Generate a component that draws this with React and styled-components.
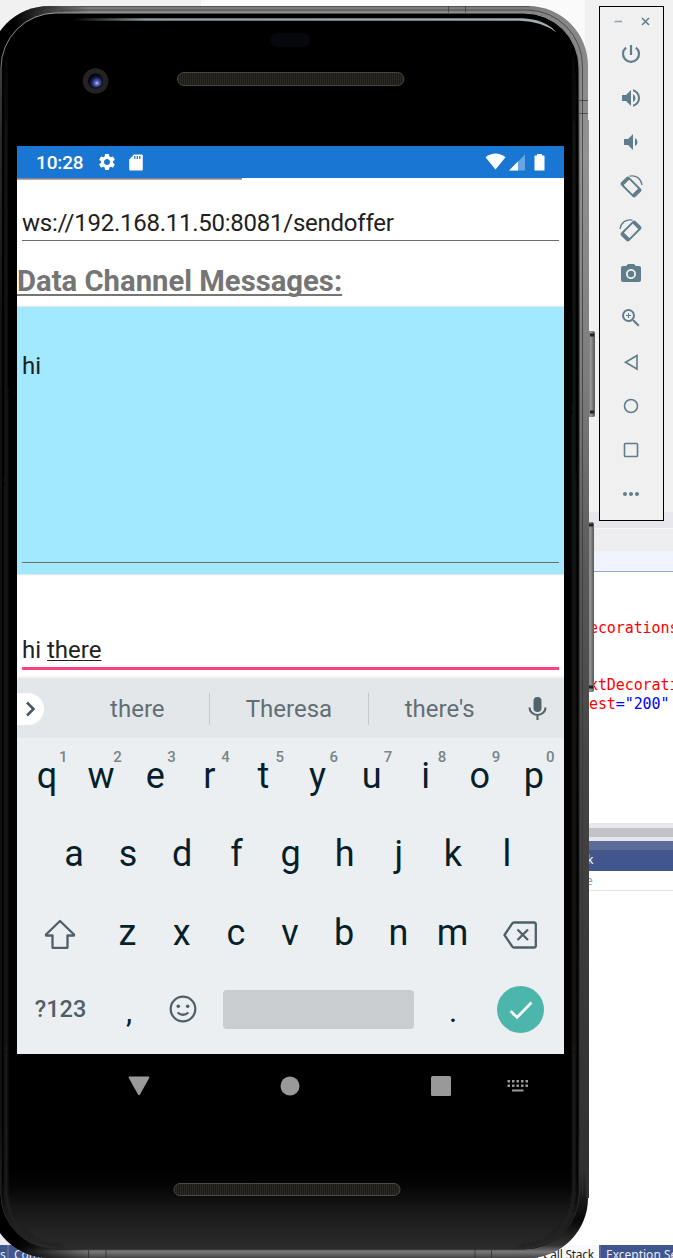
import React from "react";
import styled, { createGlobalStyle } from "styled-components";
import {
  MdSettings,
  MdVolumeUp,
  MdVolumeDown,
  MdPhotoCamera,
  MdZoomIn,
  MdMoreHoriz,
} from "react-icons/md";

const Global = createGlobalStyle`
  html, body { margin: 0; padding: 0; background: #fff; }
  * { box-sizing: border-box; }
  svg { display: block; flex: none; }
`;

const Desktop = styled.main`
  position: relative;
  width: 673px;
  height: 1258px;
  overflow: hidden;
  background: #fff;
  font-family: Roboto, "Liberation Sans", sans-serif;
`;

/* ---------- editor window behind the emulator ---------- */

const Ide = styled.section`
  display: flex;
  flex-direction: column;
  height: 1258px;
`;

const Band = styled.div`
  flex: none;
  height: ${(p) => p.$h}px;
  background: ${(p) => p.$bg};
`;

const TopBand = styled(Band)`
  display: flex;
  justify-content: center;
  padding: 0 88px 0 201px;
`;

const TopTab = styled.div`
  flex: 1;
  height: 60px;
  background: #fafafa;
`;

const Code = styled.pre`
  flex: none;
  height: 252px;
  margin: 0;
  padding: 47px 0 0 589px;
  border-top: 1px solid #93aad6;
  font: 15px/19px "DejaVu Sans Mono", monospace;
  letter-spacing: -0.1px;
  color: #f00;
  overflow: hidden;
`;

const Value = styled.span`
  color: #00f;
`;

const PaneTitle = styled.div`
  flex: none;
  height: 21px;
  padding-left: 587px;
  background: #40568d;
  color: #fff;
  font: 12px/20px "Noto Sans", sans-serif;
`;

const PaneHead = styled.div`
  flex: none;
  height: 20px;
  padding-left: 586px;
  border-bottom: 1px solid #e4e4f2;
  background: #fff;
  color: #999;
  font: 12px/19px "Noto Sans", sans-serif;
`;

const PaneBody = styled.div`
  flex: 1;
  display: flex;
  align-items: flex-end;
  background: linear-gradient(90deg, #ebebf1 0 300px, #fff 300px);
`;

const Tabs = styled.div`
  display: flex;
  width: 100%;
  height: 13px;
  overflow: hidden;
  background: linear-gradient(90deg, #40568d 0 300px, #5d6b99 300px);
`;

const Tab = styled.div`
  flex: none;
  width: ${(p) => p.$w}px;
  margin-left: ${(p) => p.$ml || 0}px;
  padding-left: ${(p) => p.$pl}px;
  background: ${(p) => (p.$active ? "#f7f8fe" : "#40568d")};
  color: ${(p) => (p.$active ? "#1e1e1e" : "#e8ecf8")};
  border-right: 2px solid #5d6b99;
  font: 12px/19px "Noto Sans", sans-serif;
  letter-spacing: ${(p) => p.$ls || 0}px;
  white-space: nowrap;
`;

/* ---------- phone ---------- */

const Phone = styled.section`
  position: absolute;
  inset: 0 auto 0 0;
  width: 600px;
  padding: 146px 36px 0 17px;
`;

const ChassisArt = styled.svg`
  position: absolute;
  top: 0;
  left: 0;
`;

const Screen = styled.div`
  position: relative;
  display: flex;
  flex-direction: column;
  height: 908px;
  background: #fff;
`;

const StatusBar = styled.header`
  display: flex;
  align-items: center;
  height: 32px;
  padding: 0 19px;
  background: #1976d2;
  color: #fff;
`;

const Clock = styled.span`
  width: 61px;
  font-size: 19px;
  font-weight: 500;
  line-height: 32px;
  padding-top: 1px;
  letter-spacing: -0.15px;
`;

const StatusGroup = styled.div`
  display: flex;
  align-items: center;
  gap: ${(p) => p.$gap}px;
  margin-left: ${(p) => (p.$end ? "auto" : "0")};
`;

const AppBody = styled.div`
  display: flex;
  flex-direction: column;
  height: 501px;
`;

const ScrollEdge = styled.div`
  width: 225px;
  height: 2px;
  background: linear-gradient(#777, #bbb);
`;

const Field = styled.div`
  margin: ${(p) => p.$mt}px 5px 0;
  height: ${(p) => p.$h}px;
  border-bottom: ${(p) => (p.$active ? "3px solid #ff4081" : "1px solid #6d6d6d")};
  color: #212121;
  font-size: 24px;
  line-height: 28px;
  letter-spacing: ${(p) => p.$ls || 0}px;
`;

const Heading = styled.h1`
  margin: 23px 0 9px;
  font-size: 29.25px;
  line-height: 34px;
  font-weight: 700;
  color: #757575;
  text-decoration: underline;
  text-decoration-thickness: 2px;
  text-underline-offset: 3px;
  text-decoration-skip-ink: none;
`;

const MessageArea = styled.div`
  height: 267px;
  padding-top: 45px;
  background: #a2e9ff;
  box-shadow: 0 0 2px rgba(0, 0, 0, 0.3);
`;

const Composing = styled.u`
  text-decoration-thickness: 1px;
  text-underline-offset: 2px;
`;

const Keyboard = styled.div`
  display: flex;
  flex-direction: column;
  height: 375px;
  background: #eceff1;
  box-shadow: 0 -1px 3px rgba(0, 0, 0, 0.15);
`;

const Suggestions = styled.div`
  display: flex;
  align-items: center;
  height: 59px;
  background: #e3e7ea;
`;

const Expand = styled.div`
  display: flex;
  align-items: center;
  justify-content: center;
  width: 27px;
  height: 32px;
  padding-left: 2px;
  margin-right: 5px;
  border-radius: 0 16px 16px 0;
  background: #fff;
`;

const Suggestion = styled.div`
  width: ${(p) => p.$w}px;
  height: 32px;
  padding-left: ${(p) => p.$pl || 0}px;
  border-right: ${(p) => (p.$last ? 0 : 1)}px solid #c3c8cb;
  text-align: center;
  font-size: 24px;
  line-height: 33px;
  color: #636e74;
`;

const Row = styled.div`
  display: flex;
  align-items: center;
  height: ${(p) => p.$h || 78}px;
  margin-top: ${(p) => p.$pull || 0}px;
  padding: 0 ${(p) => p.$inset || 3}px;
`;

const Key = styled.div`
  position: relative;
  display: flex;
  justify-content: center;
  align-items: center;
  flex: ${(p) => p.$flex || 1} 1 0;
  height: 100%;
  padding-top: ${(p) => p.$drop || 0}px;
  padding-right: ${(p) => p.$nudge || 0}px;
  color: #061f2b;
  font-size: ${(p) => p.$size || 36}px;
  line-height: 76px;
`;

const Hint = styled.span`
  position: absolute;
  top: 11px;
  right: 6.5px;
  font-size: 15px;
  font-weight: 500;
  line-height: 18px;
  color: #78858b;
`;

const Mode = styled.span`
  font-size: 23.5px;
  font-weight: 500;
  color: #4f5f67;
`;

const Space = styled.div`
  width: 191px;
  height: 39px;
  border-radius: 4px;
  background: #c9cdd0;
`;

const Enter = styled.div`
  display: flex;
  align-items: center;
  justify-content: center;
  width: 47px;
  height: 47px;
  border-radius: 50%;
  background: #4db6ac;
`;

const NavBar = styled.nav`
  position: relative;
  display: flex;
  align-items: center;
  height: 64px;
  padding-left: 111px;
`;

const NavIcon = styled.svg`
  margin-right: ${(p) => p.$mr}px;
  fill: #999;
`;

/* ---------- emulator toolbar ---------- */

const Toolbar = styled.aside`
  position: absolute;
  left: 599px;
  top: 6px;
  width: 65px;
  height: 515px;
  border: 1px solid #000;
  background: #f0f0f0;
  color: #607d8b;
`;

const WindowButtons = styled.div`
  display: flex;
  align-items: center;
  justify-content: space-between;
  height: 25px;
  padding: 3px 13px 0 14px;
`;

const Tool = styled.div`
  display: flex;
  align-items: center;
  justify-content: center;
  height: 44px;
  padding-right: 1px;
`;

function Chassis() {
  return (
    <ChassisArt width="600" height="1258" viewBox="0 0 600 1258">
      <defs>
        <linearGradient id="rim" x1="0" y1="0" x2="0" y2="1">
          <stop offset="0" stopColor="#777" />
          <stop offset="0.005" stopColor="#858585" />
          <stop offset="0.12" stopColor="#929292" />
          <stop offset="0.3" stopColor="#7c7c7c" />
          <stop offset="0.45" stopColor="#5a5a5a" />
          <stop offset="0.6" stopColor="#454545" />
          <stop offset="0.93" stopColor="#303030" />
          <stop offset="0.97" stopColor="#080808" />
          <stop offset="0.99" stopColor="#333" />
          <stop offset="0.995" stopColor="#777" />
          <stop offset="1" stopColor="#444" />
        </linearGradient>
        <linearGradient id="sideRim" gradientUnits="userSpaceOnUse" x1="0" y1="6" x2="0" y2="1258">
          <stop offset="0.12" stopColor="#929292" />
          <stop offset="0.3" stopColor="#7c7c7c" />
          <stop offset="0.45" stopColor="#5a5a5a" />
          <stop offset="0.6" stopColor="#454545" />
          <stop offset="0.93" stopColor="#303030" />
        </linearGradient>
        <linearGradient id="leftShade" gradientUnits="userSpaceOnUse" x1="0" y1="0" x2="90" y2="0">
          <stop offset="0.15" stopColor="#000" />
          <stop offset="1" stopColor="#000" stopOpacity="0" />
        </linearGradient>
        <linearGradient id="edge" x1="0" y1="0" x2="0" y2="1">
          <stop offset="0" stopColor="#999" />
          <stop offset="0.1" stopColor="#555" />
          <stop offset="0.25" stopColor="#222" />
          <stop offset="0.9" stopColor="#222" />
          <stop offset="0.97" stopColor="#444" />
          <stop offset="1" stopColor="#111" />
        </linearGradient>
        <linearGradient id="glow" x1="0" y1="0" x2="0" y2="1">
          <stop offset="0" stopColor="#000" stopOpacity="0" />
          <stop offset="0.5" stopColor="#161616" />
          <stop offset="1" stopColor="#2c2c2c" />
        </linearGradient>
        <linearGradient id="sideGlow" gradientUnits="userSpaceOnUse" x1="0" y1="40" x2="0" y2="1246">
          <stop offset="0" stopColor="#1a1a1a" stopOpacity="0" />
          <stop offset="0.08" stopColor="#1c1c1c" />
          <stop offset="1" stopColor="#202020" />
        </linearGradient>
        <linearGradient id="gloss" x1="0" y1="0" x2="1" y2="0">
          <stop offset="0" stopColor="#8fa0a0" stopOpacity="0" />
          <stop offset="0.15" stopColor="#8c9999" />
          <stop offset="1" stopColor="#a4aeb0" />
        </linearGradient>
        <linearGradient id="button" x1="0" y1="0" x2="1" y2="0">
          <stop offset="0" stopColor="#333" />
          <stop offset="0.5" stopColor="#9a9a9a" />
          <stop offset="1" stopColor="#555" />
        </linearGradient>
        <radialGradient id="lens" cx="0.6" cy="0.65" r="0.6">
          <stop offset="0" stopColor="#b9c4ff" />
          <stop offset="0.3" stopColor="#4a56b0" />
          <stop offset="0.7" stopColor="#141845" />
          <stop offset="1" stopColor="#05050c" />
        </radialGradient>
        <pattern id="mesh" width="2" height="2" patternUnits="userSpaceOnUse">
          <rect width="2" height="2" fill="#1b1a16" />
          <rect width="1" height="2" fill="#2b2923" />
        </pattern>
        <filter id="soft" filterUnits="userSpaceOnUse" x="-10" y="0" width="620" height="1258">
          <feGaussianBlur stdDeviation="1.3" />
        </filter>
        <clipPath id="face">
          <rect x="1" y="13" width="578" height="1236" rx="55" />
        </clipPath>
      </defs>

      <rect x="586" y="331" width="9" height="86" rx="2" fill="url(#button)" />
      <path d="M590 335h4M590 412h4" stroke="#222" strokeWidth="3" />
      <rect x="586" y="418" width="3" height="104" fill="#777" />
      <rect x="586" y="522" width="8" height="170" rx="2" fill="url(#button)" />
      <path d="M589 525h4M589 687h4" stroke="#222" strokeWidth="3" />

      <rect x="-11" y="6" width="599" height="1252" rx="60" fill="url(#rim)" />
      <rect x="586" y="120" width="3" height="1078" fill="url(#sideRim)" />
      <rect x="-11" y="6" width="599" height="1252" rx="60" fill="url(#leftShade)" />
      <path d="M60 10H528A56 56 0 0 1 582.5 66V1195" fill="none" stroke="#333" strokeOpacity="0.7" />
      <path d="M60 6.5H530" stroke="#555" />
      <path d="M448.500 6v7M465.500 6v7M579 100.500h9M579 113.500h9M579 1147.500h10M579 1160.500h10" stroke="#333" strokeOpacity="0.7" />
      <path d="M88.500 1250v8M106 1250v8M475 1250v8M491.500 1250v8" stroke="#222" strokeOpacity="0.6" />

      <rect x="1" y="13" width="578" height="1236" rx="55" fill="#000" stroke="url(#edge)" />
      <g clipPath="url(#face)">
        <rect x="0" y="1165" width="580" height="84" fill="url(#glow)" />
        <path d="M14 40Q6 52 6 70V1190Q8 1242 62 1246" fill="none" stroke="url(#sideGlow)" strokeWidth="3" filter="url(#soft)" />
        <path d="M566 40Q574 52 574 70V1190Q572 1242 518 1246" fill="none" stroke="url(#sideGlow)" strokeWidth="3" filter="url(#soft)" />
      </g>
      <path d="M73 18.300H522Q545 19 556.500 32.500Q542 21.500 520 20.800H73Z" fill="url(#gloss)" />

      <rect x="270" y="33" width="40" height="14" rx="7" fill="#07080d" />
      <circle cx="95.500" cy="81" r="12.800" fill="#242222" />
      <circle cx="95.500" cy="81" r="7.500" fill="#050508" />
      <circle cx="95.500" cy="81" r="6.800" fill="url(#lens)" />
      <rect x="177.500" y="72.500" width="226.500" height="13" rx="6.500" fill="url(#mesh)" stroke="#454545" />
      <rect x="174" y="1183.500" width="226" height="12" rx="6" fill="url(#mesh)" stroke="#4a4a4a" />
    </ChassisArt>
  );
}

function Rotate({ mirrored }) {
  return (
    <svg width="24" height="24" viewBox="0 0 24 24" fill="none" stroke="currentColor">
      <g transform={mirrored ? "translate(24 0) scale(-1 1)" : undefined}>
        <g transform="rotate(-45 12 13)">
          <rect x="7.200" y="3.800" width="9.600" height="18.400" rx="1.200" strokeWidth="1.900" />
          <path d="M7.200 5h9.600M7.200 20.800h9.600" strokeWidth="3.200" />
        </g>
        <path d="M10.500 2.200C17 .8 22 4.500 23 11" strokeWidth="1.300" />
      </g>
    </svg>
  );
}

const tools = [
  <svg width="24" height="24" fill="none" stroke="currentColor" strokeWidth="2.200">
    <path d="M12 3v10M7.100 5.600a8 8 0 1 0 9.800 0" />
  </svg>,
  <MdVolumeUp size={24} />,
  <MdVolumeDown size={24} />,
  <Rotate />,
  <Rotate mirrored />,
  <MdPhotoCamera size={24} />,
  <MdZoomIn size={24} />,
  <svg width="24" height="24" fill="none" stroke="currentColor" strokeWidth="1.600">
    <path d="M18 5.500v13.500L6.500 12.250z" />
  </svg>,
  <svg width="24" height="24" fill="none" stroke="currentColor" strokeWidth="1.600">
    <circle cx="12" cy="12" r="6.500" />
  </svg>,
  <svg width="24" height="24" fill="none" stroke="currentColor" strokeWidth="1.600">
    <rect x="5.500" y="5.500" width="13" height="13" rx="0.800" />
  </svg>,
  <MdMoreHoriz size={24} />,
];

const topRow = "qwertyuiop".split("");
const middleRow = "asdfghjkl".split("");
const bottomRow = "zxcvbnm".split("");

export default function App() {
  return (
    <Desktop>
      <Global />
      <Ide>
        <TopBand $h={512} $bg="#f1f1f1">
          <TopTab />
        </TopBand>
        <Band $h={16} $bg="#e6e6ec" />
        <Band $h={1} $bg="#f8f8fa" />
        <Band $h={22} $bg="#eeeef0" />
        <Band $h={20} $bg="#f0f4fe" />
        <Code>
          {"ecorations\n\n\nxtDecorati\n"}est<Value>="200"</Value>
        </Code>
        <Band $h={5} $bg="#e6e6ec" />
        <Band $h={9} $bg="#c2c3c8" />
        <Band $h={4} $bg="#e6e6ec" />
        <Band $h={9} $bg="#5d6b99" />
        <PaneTitle>k</PaneTitle>
        <PaneHead>e</PaneHead>
        <PaneBody>
          <Tabs>
            <Tab $w={9} $pl={-1}>s</Tab>
            <Tab $w={90} $pl={5}>Comm</Tab>
            <Tab $w={63} $ml={439} $pl={5} $active $ls={-0.25}>Call Stack</Tab>
            <Tab $w={110} $pl={5}>Exception Settings</Tab>
          </Tabs>
        </PaneBody>
      </Ide>

      <Phone>
        <Chassis />
        <Screen>
          <StatusBar>
            <Clock>10:28</Clock>
            <StatusGroup $gap={12}>
              <MdSettings size={20} />
              <svg width="14" height="17" viewBox="0 0 14 17">
                <path d="M5 .5h7.500q1.300 0 1.300 1.300v13.400q0 1.300-1.300 1.300h-11Q.2 16.500.2 15.200V5.500z" fill="#fff" />
                <path d="M5.800 2v3M8.300 2v3M10.800 2v3" stroke="#1976d2" strokeWidth="1.200" />
              </svg>
            </StatusGroup>
            <StatusGroup $gap={0} $end>
              <svg width="60" height="18" viewBox="0 0 60 18" fill="#fff">
                <path d="M.5 4.300Q10.500-3.200 20.500 4.300L10.500 16.500z" />
                <path d="M24 17.500 40 1.500v16z" fillOpacity="0.350" />
                <path d="M24 17.500 33 8.500v9z" />
                <path d="M50 2.500h2V1h5v1.500h2q.5 0 .5.500v14q0 .500-.5.500h-9q-.5 0-.5-.5V3q0-.5.500-.5z" />
              </svg>
            </StatusGroup>
          </StatusBar>
          <AppBody>
            <ScrollEdge />
            <Field $mt={29} $h={32} $ls={-0.25}>ws://192.168.11.50:8081/sendoffer</Field>
            <Heading>Data Channel Messages:</Heading>
            <MessageArea>
              <Field $mt={0} $h={211}>hi</Field>
            </MessageArea>
            <Field $mt={62} $h={34} $active>
              hi <Composing>there</Composing>
            </Field>
          </AppBody>
          <Keyboard>
            <Suggestions>
              <Expand>
                <svg width="12" height="16" viewBox="0 0 12 16" fill="none" stroke="#455a64" strokeWidth="2.600">
                  <path d="M2 1.500 8.500 8 2 14.500" />
                </svg>
              </Expand>
              <Suggestion $w={161} $pl={17}>there</Suggestion>
              <Suggestion $w={160}>Theresa</Suggestion>
              <Suggestion $w={141} $last>there's</Suggestion>
              <svg width="54" height="26" viewBox="0 0 54 26" fill="none" stroke="#546269" strokeWidth="2.100">
                <rect x="23.500" y="1" width="8" height="15" rx="4" fill="#546269" stroke="none" />
                <path d="M19.500 11.500a8 7.500 0 0 0 16 0M27.500 19v5" />
              </svg>
            </Suggestions>
            <Row $pull={-1}>
              {topRow.map((k, i) => (
                <Key key={k}>
                  {k}
                  <Hint>{(i + 1) % 10}</Hint>
                </Key>
              ))}
            </Row>
            <Row $inset={30}>
              {middleRow.map((k) => (
                <Key key={k}>{k}</Key>
              ))}
            </Row>
            <Row $h={79}>
              <Key $flex={1.5} $drop={2} $nudge={1}>
                <svg width="32" height="30" viewBox="0 0 32 30" fill="none" stroke="#4f5f67" strokeWidth="2.300" strokeLinejoin="round">
                  <path d="M16 2 30 15.500v1h-6.500V28q0 1-1 1h-13q-1 0-1-1V16.500H2v-1z" />
                </svg>
              </Key>
              {bottomRow.map((k) => (
                <Key key={k} $drop={1} $nudge={1}>{k}</Key>
              ))}
              <Key $flex={1.5} $drop={4} $nudge={1}>
                <svg width="34" height="28" viewBox="0 0 34 28" fill="none" stroke="#4f5f67" strokeWidth="2.300" strokeLinejoin="round">
                  <path d="M11 1.500h20q1.800 0 1.800 1.800v21.400q0 1.800-1.800 1.800H11q-1.200 0-1.800-1L1.500 14l7.700-11.500q.6-1 1.800-1zM14.500 8.500l10.500 10.500M25 8.500l-10.500 10.500" />
                </svg>
              </Key>
            </Row>
            <Row $h={76} $pull={-1}>
              <Key $flex={1.5} $nudge={1}>
                <Mode>?123</Mode>
              </Key>
              <Key $size={31} $drop={5}>,</Key>
              <Key>
                <svg width="28" height="28" viewBox="0 0 28 28" fill="none" stroke="#4f5f67" strokeWidth="2.200">
                  <circle cx="14" cy="14" r="12.300" />
                  <path d="M8.500 17.500q5.500 4.500 11 0" />
                  <circle cx="9.300" cy="11.300" r="1.800" fill="#4f5f67" stroke="none" />
                  <circle cx="18.700" cy="11.300" r="1.800" fill="#4f5f67" stroke="none" />
                </svg>
              </Key>
              <Key $flex={4}>
                <Space />
              </Key>
              <Key $size={31} $drop={5}>.</Key>
              <Key $flex={1.5} $drop={1}>
                <Enter>
                  <svg width="24" height="20" viewBox="0 0 24 20" fill="none" stroke="#fff" strokeWidth="2.600">
                    <path d="M1.500 11 8 17.500 22.500 2.500" />
                  </svg>
                </Enter>
              </Key>
            </Row>
          </Keyboard>
        </Screen>
        <NavBar>
          <NavIcon $mr={130} width="22" height="20">
            <path d="M1.500.5h19q1.500 0 .8 1.200L12 18.500q-1 1.200-2 0L.7 1.700Q0 .5 1.500.5z" />
          </NavIcon>
          <NavIcon $mr={131} width="20" height="20">
            <circle cx="10" cy="10" r="9.500" />
          </NavIcon>
          <NavIcon $mr={56} width="20" height="20">
            <rect width="20" height="20" rx="1.500" />
          </NavIcon>
          <NavIcon width="22" height="14">
            {[0, 1, 2, 3, 4].map((i) => (
              <React.Fragment key={i}>
                <rect x={0.5 + i * 4.5} y="1" width="2.500" height="2.500" />
                <rect x={0.5 + i * 4.5} y="5.500" width="2.500" height="2.500" />
              </React.Fragment>
            ))}
            <rect x="5" y="10.500" width="11.500" height="2" />
          </NavIcon>
        </NavBar>
      </Phone>

      <Toolbar>
        <WindowButtons>
          <svg width="9" height="9" stroke="#90a4ae" strokeWidth="1.500">
            <path d="M.5 4.500h7.500" />
          </svg>
          <svg width="9" height="9" stroke="#607d8b" strokeWidth="1.500">
            <path d="M1 1l7 7M8 1 1 8" />
          </svg>
        </WindowButtons>
        {tools.map((icon, i) => (
          <Tool key={i}>{icon}</Tool>
        ))}
      </Toolbar>
    </Desktop>
  );
}
